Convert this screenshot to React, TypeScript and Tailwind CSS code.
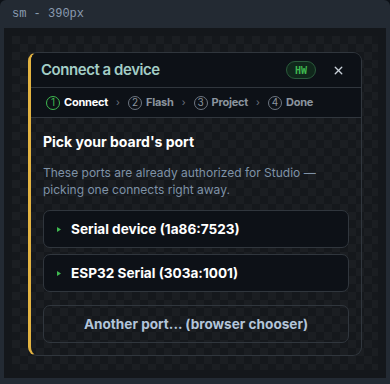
import { X } from "lucide-react";

const steps = ["Connect", "Flash", "Project", "Done"];
const ports = ["Serial device (1a86:7523)", "ESP32 Serial (303a:1001)"];

export default function App() {
  return (
    <div className="h-[384px] w-[390px] overflow-hidden bg-[#0d1117] font-['Inter',sans-serif]">
      {/* preview frame */}
      <div className="flex h-full flex-col rounded-t-[6px] bg-[#232a33] px-1 pb-1.5">
        <div className="flex h-7 items-center px-2 font-['Liberation_Mono',monospace] text-[12px] text-[#8a9bb0]">
          sm - 390px
        </div>
        <div className="flex-1 bg-[#14171b] p-2">
          <div className="h-full bg-[conic-gradient(#15181c_25%,#1b1e22_0_50%,#15181c_0_75%,#1b1e22_0)] bg-[length:16px_16px] px-4 pt-4">
            {/* dialog card */}
            <div className="overflow-hidden rounded-[9px] border border-l-[3px] border-[#30363d] border-l-[#e3b341]">
              <div className="flex h-[35px] items-center justify-between border-b border-[#30363d] bg-[#0d1117] pl-2.5 pr-4">
                <span className="text-[15px] font-semibold tracking-[-0.03em] text-[#a3cdc6]">Connect a device</span>
                <div className="flex items-center gap-4">
                  <span className="flex h-[18px] w-[30px] items-center justify-center rounded-full border border-[#2b5a3c] bg-[#10271b] font-['DejaVu_Sans_Mono',monospace] text-[10px] font-bold text-[#3fb950]">
                    HW
                  </span>
                  <X size={13} strokeWidth={2.5} className="text-[#c9d1d9]" />
                </div>
              </div>
              <div className="flex h-[30px] items-center gap-2 border-b border-[#30363d] bg-[#0d1117] px-[15px]">
                {steps.map((s, i) => (
                  <div key={s} className="flex items-center gap-2">
                    <div className="flex items-center gap-[4px]">
                      <span
                        className={`flex h-[14px] w-[14px] items-center justify-center rounded-full border text-[10px] ${
                          i === 0 ? "border-[#3fb950] text-[#3fb950]" : "border-[#6e7681] text-[#8b949e]"
                        }`}
                      >
                        {i + 1}
                      </span>
                      <span className={`text-[11px] font-bold tracking-[-0.02em] ${i === 0 ? "text-white" : "text-[#8b949e]"}`}>
                        {s}
                      </span>
                    </div>
                    {i < steps.length - 1 && <span className="text-[10px] text-[#6e7681]">›</span>}
                  </div>
                ))}
              </div>
              <div className="px-3 pb-3 pt-[14px]">
                <h2 className="text-[14px] font-bold leading-5 text-white">Pick your board's port</h2>
                <p className="mt-3 text-[12px] leading-[17px] text-[#7f92a7]">
                  These ports are already authorized for Studio — picking one connects right away.
                </p>
                <div className="mt-3 flex flex-col gap-1.5">
                  {ports.map((p) => (
                    <button
                      key={p}
                      className="flex h-[38px] items-center gap-2.5 rounded-[7px] border border-[#30363d] bg-[#0d1117] px-[13px] text-left text-[13.6px] font-bold text-white"
                    >
                      <svg width="4" height="5" viewBox="0 0 4 5">
                        <path d="M0 0L4 2.5L0 5Z" fill="#3fb950" />
                      </svg>
                      {p}
                    </button>
                  ))}
                </div>
                <button className="mt-[13px] flex h-[38px] w-full items-center justify-center rounded-[7px] border border-[#30363d] text-[13.6px] font-bold text-[#b3c5da]">
                  Another port... (browser chooser)
                </button>
              </div>
            </div>
          </div>
        </div>
      </div>
    </div>
  );
}
